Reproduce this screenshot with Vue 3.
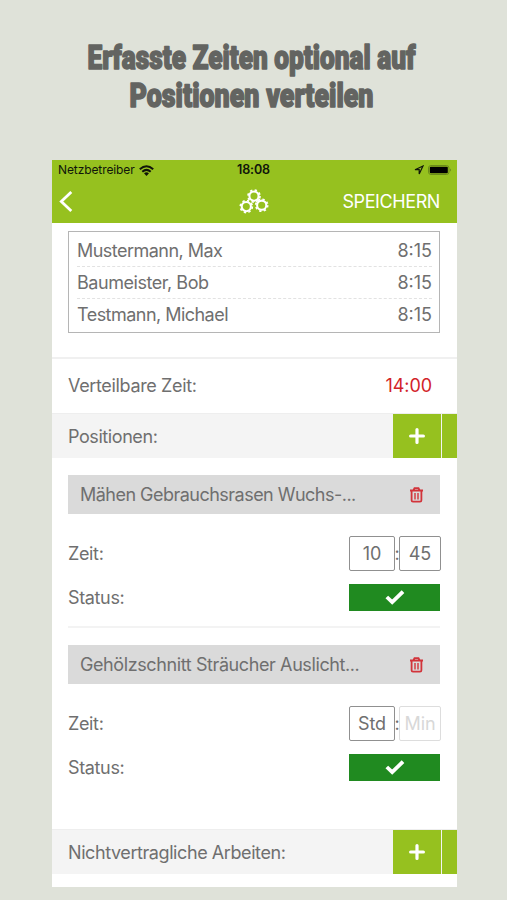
<script setup>
const workers = [
  { name: 'Mustermann, Max', time: '8:15', cls: 'w-max' },
  { name: 'Baumeister, Bob', time: '8:15', cls: 'w-bob' },
  { name: 'Testmann, Michael', time: '8:15', cls: 'w-mic' },
]
const positions = [
  { title: 'Mähen Gebrauchsrasen Wuchs-...', h: '10', m: '45', empty: false },
  { title: 'Gehölzschnitt Sträucher Auslicht...', h: 'Std', m: 'Min', empty: true },
]
const gears = [[15, 7.1], [7.3, 17.6], [22.7, 16.2]]
</script>

<template>
  <div class="page">
    <svg class="title" width="507" height="100" viewBox="0 0 507 100">
      <text x="87.5" y="48.5" textLength="328" lengthAdjust="spacingAndGlyphs">Erfasste Zeiten optional auf</text>
      <text x="129.5" y="86.5" textLength="244" lengthAdjust="spacingAndGlyphs">Positionen verteilen</text>
    </svg>
    <main class="phone">
      <header>
        <div class="status">
          <span class="carrier">Netzbetreiber
            <svg width="15" height="11" viewBox="0 0 15 11" fill="none" stroke="#10150a" stroke-width="2">
              <path d="M.8 4.2Q7.5-1.8 14.2 4.2M3.3 6.8Q7.5 3 11.7 6.8" /><path d="M5 8.3Q7.5 6.2 10 8.3L7.5 11Z" fill="#10150a" stroke="none" />
            </svg>
          </span>
          <b>18:08</b>
          <span class="power">
            <svg width="10" height="10" viewBox="0 0 10 10" fill="none" stroke="#10150a" stroke-width="1.2"><path d="M9 1L1 4.7H5.2V9Z" /></svg>
            <svg width="24" height="10" viewBox="0 0 24 10"><rect x=".5" y=".5" width="20.5" height="9" rx="2.5" fill="none" stroke="#6c8b1a" /><rect x="1.8" y="1.7" width="18" height="6.6" rx="1" fill="#000" /><path d="M22 3.5Q24 5 22 6.5Z" fill="#6c8b1a" /></svg>
          </span>
        </div>
        <div class="nav">
          <svg width="14" height="22" viewBox="0 0 14 22" fill="none" stroke="#fff" stroke-width="2.8"><path d="M12.3 1L2.3 10.5L12.3 20" /></svg>
          <svg class="gears" width="30" height="25" viewBox="0 0 30 25" fill="none" stroke="#fff">
            <g v-for="(g, i) in gears" :key="i">
              <circle :cx="g[0]" :cy="g[1]" r="4.6" stroke-width="2.1" />
              <circle :cx="g[0]" :cy="g[1]" r="6" stroke-width="1.7" stroke-dasharray="2.3 2.412" />
            </g>
          </svg>
          <span class="save">SPEICHERN</span>
        </div>
      </header>
      <section class="people">
        <div v-for="w in workers" :key="w.name" class="person"><span :class="w.cls">{{ w.name }}</span><span class="hrs">{{ w.time }}</span></div>
      </section>
      <div class="available"><span>Verteilbare Zeit:</span><span class="red">14:00</span></div>
      <div class="bar">
        <span class="head">Positionen:</span>
        <i class="add"><svg width="16" height="16" viewBox="0 0 16 16" stroke="#fff" stroke-width="3.2" stroke-linecap="round"><path d="M8 1.6V14.4M1.6 8H14.4" /></svg></i><i class="edge"></i>
      </div>
      <section class="positions">
        <article v-for="(p, i) in positions" :key="i">
          <div class="card">
            <span :class="'card' + i">{{ p.title }}</span>
            <svg width="13" height="16" viewBox="0 0 13 16" fill="none" stroke="#d2333a" stroke-width="1.8"><path d="M0 3.5H13M3.5 3.2L4.5 1.2H8.5L9.5 3.2M1.6 3.5V13.3Q1.6 14.7 3 14.7H10Q11.4 14.7 11.4 13.3V3.5" /><path d="M5 6V12.5M8 6V12.5" stroke-width="1.4" /></svg>
          </div>
          <div class="row time"><span>Zeit:</span><div class="inputs"><span class="box hours">{{ p.h }}</span><span class="colon">:</span><span class="box mins" :class="{ empty: p.empty }">{{ p.m }}</span></div></div>
          <div class="row state"><span>Status:</span><i class="check"><svg width="20" height="15" viewBox="0 0 20 15" fill="none" stroke="#fff" stroke-width="3.8"><path d="M1.8 7L7.2 12.2L18 1.7" /></svg></i></div>
        </article>
      </section>
      <div class="bar">
        <span class="extra">Nichtvertragliche Arbeiten:</span>
        <i class="add"><svg width="16" height="16" viewBox="0 0 16 16" stroke="#fff" stroke-width="3.2" stroke-linecap="round"><path d="M8 1.6V14.4M1.6 8H14.4" /></svg></i><i class="edge"></i>
      </div>
    </main>
  </div>
</template>

<style>
body { margin: 0; background: #dfe2d9; }
</style>
<style scoped>
* { box-sizing: border-box; }
.page { width: 507px; height: 900px; padding-top: 20px; overflow: hidden; background: #dfe2d9; font: 18px/24px Inter, sans-serif; letter-spacing: -.35px; color: #6f6f6f; }
svg { display: block; flex: none; }
.title { font: 900 32.5px Roboto, sans-serif; letter-spacing: 0; fill: #636461; stroke: #636461; stroke-width: 1.5px; stroke-linejoin: round; }
.phone { width: 405px; height: 727px; margin: 40px 0 0 52px; background: #fff; overflow: hidden; }
header { height: 63px; background: #96c11f; }
.status { height: 20px; padding: 0 5px 0 6px; display: grid; grid-template-columns: 1fr auto 1fr; align-items: center; font-size: 12px; line-height: 20px; letter-spacing: -.1px; color: #10150a; }
.status b { font-weight: 600; font-size: 12.5px; margin-right: 3px; }
.carrier { display: flex; align-items: center; gap: 4px; }
.power { display: flex; justify-content: flex-end; align-items: center; gap: 4px; }
.nav { height: 43px; padding: 0 17px 0 7px; display: grid; grid-template-columns: 1fr auto 1fr; align-items: center; color: #fff; }
.gears { margin-left: 8px; }
.save { justify-self: end; font-size: 18px; letter-spacing: -.4px; }
.people { margin: 8px 17px 0 16px; height: 102px; padding: 3px 7px 0 8px; border: 1px solid #b5b5b5; }
.person { height: 32px; display: flex; justify-content: space-between; align-items: center; border-bottom: 1px dashed #e2e2e2; }
.person:last-child { border: 0; }
.w-max, .w-mic { letter-spacing: -.53px; }
.w-bob { letter-spacing: -.45px; }
.hrs { letter-spacing: 0; }
.available { margin-top: 24px; height: 56px; border-top: 2px solid #f0f0f0; padding: 0 25px 0 16px; display: flex; justify-content: space-between; align-items: center; }
.red { color: #d2232a; letter-spacing: -.05px; }
.bar { height: 45px; display: flex; align-items: center; padding-left: 16px; background: #f4f4f4; border-top: 1px solid #eee; }
.bar > span { flex: 1; padding-top: 1px; }
.head, .extra { letter-spacing: -.42px; }
.add { width: 48px; height: 44px; background: #96c11f; display: grid; place-items: center; }
.edge { width: 15px; height: 44px; margin-left: 1px; background: #96c11f; }
.positions { height: 371px; padding: 17px 17px 0 16px; }
article { height: 170px; }
.card { height: 39px; background: #dadada; padding: 0 17px 0 12px; display: flex; justify-content: space-between; align-items: center; }
.card0 { letter-spacing: -.52px; }
.card1 { letter-spacing: -.4px; }
.row { display: flex; justify-content: space-between; align-items: center; }
.time { height: 35px; margin-top: 22px; }
.inputs { display: flex; height: 35px; margin-right: -1px; }
.box { display: flex; align-items: center; justify-content: center; border: 1px solid #909090; border-radius: 2px; letter-spacing: -.1px; }
.hours { width: 46px; }
.mins { width: 42px; }
.colon { width: 4px; display: flex; align-items: center; justify-content: center; }
.empty { border-color: #ddd; color: #d8d8d8; }
.state { height: 27px; margin-top: 13px; }
.check { width: 91px; height: 27px; background: #208a20; display: grid; place-items: center; }
article:first-child::after { content: ''; display: block; margin-top: 15px; height: 2px; background: #f3f3f3; }
</style>
